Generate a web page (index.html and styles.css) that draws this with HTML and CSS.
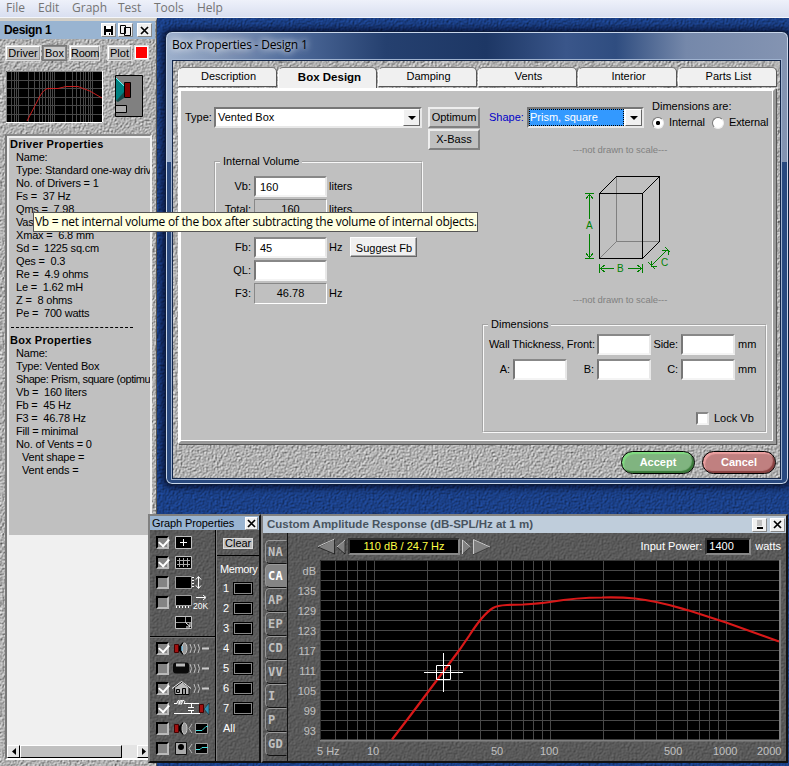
FILE: index.html
```html
<!DOCTYPE html>
<html lang="en">
<head>
<meta charset="utf-8">
<title>Box Properties - Design 1</title>
<link rel="stylesheet" href="styles.css">
</head>
<body>
<nav class="menubar"><span>File</span><span>Edit</span><span>Graph</span><span>Test</span><span>Tools</span><span>Help</span></nav>

<section class="design">
  <header class="bar design-bar">
    <b>Design 1</b>
    <span class="sysbtn"><svg width="11" height="11"><path d="M1 1h9v9H1z"/><path d="M3 1h5v3H3zM3 7h5v3H3z" fill="#fff"/><path d="M6 8h1v2H6z"/></svg></span>
    <span class="sysbtn"><svg width="11" height="11" fill="#f0f0f0" stroke="#000"><path d="M.5.5h5v8h-5zM4.500 2.500h6v8h-6z"/></svg></span>
    <span class="sysbtn last"><svg width="9" height="9" stroke="#000" stroke-width="1.700"><path d="M1 1l7 7M8 1L1 8"/></svg></span>
  </header>
  <div class="tools">
    <button class="t1">Driver</button><button class="t2 on">Box</button><button class="t3">Room</button><button class="t4">Plot</button><i class="swatch"></i>
  </div>
  <div class="thumbs">
    <svg class="mini" width="97" height="52"><rect width="97" height="52" fill="#000"/>
      <path d="M5.500 1v50M8.500 1v50M10.500 1v50M12.500 1v50M22.500 1v50M28.500 1v50M33.500 1v50M36.500 1v50M39.500 1v50M42.500 1v50M44.500 1v50M46.500 1v50M48.500 1v50M59.500 1v50M66.500 1v50M70.500 1v50M74.500 1v50M77.500 1v50M79.500 1v50M82.500 1v50M84.500 1v50M86.500 1v50M1 9.500h95M1 17.500h95M1 26.500h95M1 34.500h95M1 43.500h95" stroke="#484848"/>
      <path d="M21 50L34 25Q38 18 42 17.500H52L60 15.500H72Q84 19 96 27" fill="none" stroke="#c82020"/>
      <path d="M0 51.500h96.500V0" fill="none" stroke="#fff"/><path d="M.5 51V.5H96" fill="none" stroke="#808080"/></svg>
    <svg class="speaker" width="28" height="42"><path d="M.5.5h27v41H.5z" fill="#808080" stroke="#000"/><path d="M1 3l8 8v7l-8 8z" fill="#008080"/><path d="M1 26l8-9v6l-6 4z" fill="#154848"/><path d="M1 3l8 8" stroke="#5ff"/><path d="M9.500 7.500h6v15h-6z" fill="#800000" stroke="#000"/><path d="M1 30h10v7H1z" fill="#aaa"/><path d="M1 30.500h10.500v7H1" fill="none" stroke="#000"/></svg>
  </div>
  <div class="list">
    <div class="list-body">
      <h3>Driver Properties</h3>
      <p>Name:</p><p>Type: Standard one-way driv</p><p>No. of Drivers = 1</p><p>Fs =&nbsp; 37 Hz</p><p>Qms =&nbsp; 7.98</p><p>Vas</p><p>Xmax =&nbsp; 6.8 mm</p><p>Sd =&nbsp; 1225 sq.cm</p><p>Qes =&nbsp; 0.3</p><p>Re =&nbsp; 4.9 ohms</p><p>Le =&nbsp; 1.62 mH</p><p>Z =&nbsp; 8 ohms</p><p>Pe =&nbsp; 700 watts</p>
      <div class="rule"></div>
      <h3>Box Properties</h3>
      <p>Name:</p><p>Type: Vented Box</p><p class="tight">Shape: Prism, square (optimu</p><p>Vb =&nbsp; 160 liters</p><p>Fb =&nbsp; 45 Hz</p><p>F3 =&nbsp; 46.78 Hz</p><p>Fill = minimal</p><p>No. of Vents = 0</p><p class="in">Vent shape =</p><p class="in">Vent ends =</p>
    </div>
    <div class="scroll"><i class="sb"><svg width="4" height="7"><path d="M4 0v7L0 3.500z"/></svg></i><i class="thumb"></i><i class="track"></i><i class="sb"><svg width="4" height="7"><path d="M0 0v7l4-3.500z"/></svg></i></div>
  </div>
</section>

<section class="dialog">
  <h2><span>Box Properties - Design 1</span></h2>
  <div class="client">
    <div class="tabs"><span>Description</span><span class="sel">Box Design</span><span>Damping</span><span>Vents</span><span>Interior</span><span>Parts List</span></div>
    <div class="page">
      <div class="left">
        <div class="type-row">
          <label>Type:</label>
          <div class="combo type"><span>Vented Box</span><i><svg width="8" height="4"><path d="M0 0h8L4 4z"/></svg></i></div>
          <div class="stack"><button>Optimum</button><button>X-Bass</button></div>
        </div>
        <fieldset class="volume"><legend>Internal Volume</legend>
          <div class="field"><label>Vb:</label><span class="input">160</span><em>liters</em></div>
          <div class="field"><label>Total:</label><span class="input ro">160</span><em>liters</em></div>
        </fieldset>
        <div class="tuning">
          <div class="field"><label>Fb:</label><span class="input">45</span><em>Hz</em><button class="suggest">Suggest Fb</button></div>
          <div class="field"><label>QL:</label><span class="input"></span></div>
          <div class="field"><label>F3:</label><span class="input ro">46.78</span><em>Hz</em></div>
        </div>
      </div>
      <div class="right">
        <div class="shape-row">
          <label class="blue">Shape:</label>
          <div class="combo shape"><span>Prism, square</span><i><svg width="8" height="4"><path d="M0 0h8L4 4z"/></svg></i></div>
          <div class="units"><div>Dimensions are:</div><div class="radios"><i class="radio on"></i><span>Internal</span><i class="radio"></i><span class="ext">External</span></div></div>
        </div>
        <div class="scale">---not drawn to scale---</div>
        <svg class="prism" width="90" height="100" fill="none" shape-rendering="crispEdges">
          <g stroke="#808080"><path d="M31.500 1.500v65H75M31.500 66.500l-17 17"/></g>
          <path d="M14.500 18.500h43v65h-43zM14.500 18.500l17-17h43l-17 17M74.500 1.500v65l-17 17" stroke="#000"/>
          <g stroke="#008000"><path d="M0 18.500h9M0 83.500h9M4.500 19v25M4.500 59v24M1 24l3.500-5L8 24M1 78l3.500 5L8 78M14.500 89v9M57.500 89v9M15 93.500h14M43 93.500h14M20 90l-5 3.500 5 3.500M52 90l5 3.500-5 3.500M66 91l16-16M63 87l7 7M80 72l5 5M66 86v5h6M77 75h6v5"/></g>
          <g fill="#008000" font-size="10"><text x="1" y="54">A</text><text x="32" y="97">B</text><text x="76" y="91">C</text></g>
        </svg>
        <div class="scale second">---not drawn to scale---</div>
        <fieldset class="dims"><legend>Dimensions</legend>
          <div class="drow"><label class="wide">Wall Thickness, Front:</label><span class="input"></span><label>Side:</label><span class="input"></span><em>mm</em></div>
          <div class="drow"><label class="a">A:</label><span class="input"></span><label>B:</label><span class="input"></span><label>C:</label><span class="input"></span><em>mm</em></div>
          <div class="lock"><i class="check"></i><span>Lock Vb</span></div>
        </fieldset>
      </div>
    </div>
    <div class="actions"><button class="pill ok">Accept</button><button class="pill no">Cancel</button></div>
  </div>
</section>

<section class="gprops">
  <header class="bar"><span>Graph Properties</span><span class="sysbtn last"><svg width="9" height="9" stroke="#000" stroke-width="1.700"><path d="M1 1l7 7M8 1L1 8"/></svg></span></header>
  <div class="gbody">
    <div class="gleft">
      <div class="group">
        <div class="g"><i class="ck on"></i><svg width="42" height="20"><path d="M3.500 4.500h16v12h-16z" stroke="#c0c0c0"/><path d="M11.500 7v7M8 10.500h7" stroke="#fff"/></svg></div>
        <div class="g"><i class="ck on"></i><svg width="42" height="20"><path d="M3.500 4.500h16v12h-16z" stroke="#c0c0c0"/><path d="M7.500 6v9M11.500 6v9M15.500 6v9M5 8.500h13M5 12.500h13" stroke="#aaa"/></svg></div>
        <div class="g"><i class="ck"></i><svg width="42" height="20"><path d="M3.500 4.500h16v12h-16z" stroke="#a0a0a0"/><path d="M20 5.500h2M20 8.500h2M20 11.500h2M20 14.500h2M26.500 5v11M24 7.500l2.500-3 2.500 3M24 13.500l2.500 3 2.500-3" stroke="#fff" fill="none"/></svg></div>
        <div class="g"><i class="ck"></i><svg width="42" height="20"><path d="M3.500 3.500h16v10h-16z" stroke="#a0a0a0"/><path d="M4.500 14v2M7.500 14v2M10.500 14v2M13.500 14v2M16.500 14v2M24 5.500h9M31 3l3 2.500L31 8" stroke="#fff" fill="none"/><text x="21" y="17" font-size="8.500" fill="#fff">20K</text></svg></div>
        <div class="g"><i class="nock"></i><svg width="42" height="20"><path d="M3.500 4.500h16v12h-16z" stroke="#c0c0c0"/><path d="M13.500 5v5.500M4 10.500h15" stroke="#999" fill="none"/><path d="M13.500 10.500l4.500 4M18 11v4h-4" stroke="#fff" fill="none"/></svg></div>
      </div>
      <div class="group two">
        <div class="g"><i class="ck on"></i><svg width="42" height="20"><path d="M2.500 6.500h4v8h-4z" fill="#a01010" stroke="#400"/><path d="M7 8l4-4v13l-4-4z" fill="#000"/><ellipse cx="12.500" cy="10.500" rx="2.500" ry="5.500" fill="#999" stroke="#ccc"/><path d="M10 8v5" stroke="#6cf"/><path d="M18 6q3 4.500 0 9M22 6q3 4.500 0 9M26 6q3 4.500 0 9" fill="none" stroke="#bbb"/><path d="M30 10.500h7" stroke="#ccc" stroke-width="2"/></svg></div>
        <div class="g"><i class="ck"></i><svg width="42" height="20"><rect x="1" y="4.500" width="16" height="11" rx="3" fill="#0a0a0a"/><path d="M4 7h9" stroke="#bbb" stroke-width="3"/><path d="M18 6q3 4.500 0 9M22 6q3 4.500 0 9M26 6q3 4.500 0 9" fill="none" stroke="#bbb"/><path d="M30 10.500h7" stroke="#ccc" stroke-width="2"/></svg></div>
        <div class="g"><i class="ck on"></i><svg width="42" height="20"><path d="M2.500 9.500L10 4l7 5.500v7h-14z" fill="#bbb" stroke="#000"/><path d="M0 10.500L9.500 3.500l9.500 7" fill="none" stroke="#eee"/><path d="M4.500 11.500h3v3h-3zM10.500 10.500h3v6h-3z" fill="#999" stroke="#000"/><path d="M22 6q3 4.500 0 9M26 6q3 4.500 0 9" fill="none" stroke="#bbb"/><path d="M30 10.500h7" stroke="#ccc" stroke-width="2"/></svg></div>
        <div class="g"><i class="ck on"></i><svg width="42" height="20"><path d="M2 5.500h3q0-3 2-3t0 4q-1-4 2-4t0 4q-1-4 2-4t1 3h15M2 15.500h26M19.500 6v3M16 9.500h6M16 12.500h6M19.500 13v3" fill="none" stroke="#fff"/><path d="M27.500 6.500h4v8h-4z" fill="#a01010" stroke="#400"/><path d="M37 5v12l-5-6z" fill="#3090b0" stroke="#111" stroke-width=".5"/></svg></div>
        <div class="g"><i class="ck"></i><svg width="42" height="20"><path d="M2.500 6.500h4v8h-4z" fill="#a01010" stroke="#400"/><path d="M7 8l4-4v13l-4-4z" fill="#000"/><ellipse cx="12.500" cy="10.500" rx="2.500" ry="5.500" fill="#999" stroke="#ccc"/><path d="M20 6l-3 4.500 3 4.500" fill="none" stroke="#bbb"/><path d="M23.500 5.500h12v10h-12z" stroke="#999"/><path d="M24 12.500h6l4-4h2" fill="none" stroke="#4dd"/></svg></div>
        <div class="g"><i class="ck"></i><svg width="42" height="20"><path d="M3.500 4.500h11v12h-11z" fill="#aaa" stroke="#111"/><circle cx="9" cy="9" r="3"/><path d="M20 6l-3 4.500 3 4.500" fill="none" stroke="#bbb"/><path d="M23.500 5.500h12v10h-12z" stroke="#999"/><path d="M24 11.500h4l2-2h6" fill="none" stroke="#4dd"/></svg></div>
      </div>
    </div>
    <div class="gright">
      <div class="clear"><span>Clear</span></div>
      <div class="mem"><div class="mh">Memory</div>
        <div class="m"><span>1</span><i></i></div><div class="m"><span>2</span><i></i></div><div class="m"><span>3</span><i></i></div><div class="m"><span>4</span><i></i></div><div class="m"><span>5</span><i></i></div><div class="m"><span>6</span><i></i></div><div class="m"><span>7</span><i></i></div><div class="m"><span>All</span></div>
      </div>
    </div>
  </div>
</section>

<section class="amp">
  <header class="bar pale"><b>Custom Amplitude Response (dB-SPL/Hz at 1 m)</b><span class="sysbtn"><svg width="9" height="11"><path d="M2 1h5v6H2z" fill="#c0c0c0"/><path d="M2 8h6v2H2z"/></svg></span><span class="sysbtn last"><svg width="9" height="9" stroke="#000" stroke-width="1.700"><path d="M1 1l7 7M8 1L1 8"/></svg></span></header>
  <div class="abody">
    <div class="side"><span>NA</span><span class="cur">CA</span><span>AP</span><span>EP</span><span>CD</span><span>VV</span><span>I</span><span>P</span><span>GD</span></div>
    <div class="plot">
      <div class="ctl">
        <svg width="30" height="18" fill="#808080"><path d="M17.500 1v15L1 9z" stroke="#000" stroke-width=".6"/><path d="M17.500 1L1 8.500" stroke="#ccc"/><path d="M28 2v14l-8-7z" stroke="#000" stroke-width=".6"/><path d="M28 2l-8 7" stroke="#ccc"/></svg>
        <div class="read">110 dB / 24.7 Hz</div>
        <svg width="30" height="18" fill="#808080"><path d="M1.500 2v14l8-7z" stroke="#222" stroke-width=".6"/><path d="M1.500 16V2l8 7" fill="none" stroke="#ccc"/><path d="M12.500 1v15.500L29 9z" stroke="#222" stroke-width=".6"/><path d="M12.500 16V1.500L29 9" fill="none" stroke="#ccc"/></svg>
        <span class="ip">Input Power:</span><div class="pw">1400</div><span>watts</span>
      </div>
      <svg class="chart" width="499" height="202">
        <path d="M32 0h461v180H32z"/>
        <path stroke="#484848" shape-rendering="crispEdges" d="M47.500 1v179M59.500 1v179M69.500 1v179M78.500 1v179M86.500 1v179M139.500 1v179M170.500 1v179M192.500 1v179M209.500 1v179M223.500 1v179M235.500 1v179M245.500 1v179M254.500 1v179M262.500 1v179M315.500 1v179M346.500 1v179M368.500 1v179M385.500 1v179M399.500 1v179M411.500 1v179M421.500 1v179M430.500 1v179M438.500 1v179M33 10.500h458M33 20.500h458M33 30.500h458M33 40.500h458M33 50.500h458M33 60.500h458M33 70.500h458M33 80.500h458M33 90.500h458M33 100.500h458M33 110.500h458M33 120.500h458M33 130.500h458M33 140.500h458M33 150.500h458M33 160.500h458M33 170.500h458"/>
        <path d="M32 180.500h460V0" fill="none" stroke="#808080" stroke-width="2"/><path d="M32.500 180V.5H491" fill="none" stroke="#333"/>
        <path d="M104 179.500L122 156L155 112L171 90.500L181 76Q195 54 205 48Q209 45.500 219 45L235 44.500Q252 43.500 262 42C280 39 295 37.500 314 37.500Q332 37 347 38.500C370 41 385 46 401 50.500L438 62.500L491 81.500" fill="none" stroke="#d81818" stroke-width="2.200"/>
        <path d="M136 112.500h39M155.500 93v39M148.500 105.500h14v14h-14z" fill="none" stroke="#fff"/>
        <g class="ylab"><text x="28" y="15">dB</text><text x="28" y="35">135</text><text x="28" y="55">129</text><text x="28" y="75">123</text><text x="28" y="95">117</text><text x="28" y="115">111</text><text x="28" y="135">105</text><text x="28" y="155">99</text><text x="28" y="175">93</text></g>
        <g class="xlab"><text x="29" y="195">5 Hz</text><text x="79" y="195">10</text><text x="203" y="195">50</text><text x="252" y="195">100</text><text x="376" y="195">500</text><text x="425" y="195">1000</text><text x="469" y="195">2000</text></g>
      </svg>
    </div>
  </div>
</section>

<div class="tooltip">Vb = net internal volume of the box after subtracting the volume of internal objects.</div>
</body>
</html>
```
FILE: styles.css
```css
:root {
  --stone: url("data:image/svg+xml,%3Csvg xmlns='http://www.w3.org/2000/svg' width='256' height='256'%3E%3Cfilter id='f' x='0' y='0' width='1' height='1' color-interpolation-filters='sRGB'%3E%3CfeTurbulence type='fractalNoise' baseFrequency='.55' numOctaves='2' stitchTiles='stitch'/%3E%3CfeDiffuseLighting surfaceScale='1' lighting-color='%23fafafa'%3E%3CfeDistantLight azimuth='225' elevation='45'/%3E%3C/feDiffuseLighting%3E%3C/filter%3E%3Crect width='256' height='256' filter='url(%23f)'/%3E%3C/svg%3E");
  --slate: url("data:image/svg+xml,%3Csvg xmlns='http://www.w3.org/2000/svg' width='256' height='256'%3E%3Cfilter id='f' x='0' y='0' width='1' height='1' color-interpolation-filters='sRGB'%3E%3CfeTurbulence type='fractalNoise' baseFrequency='.5' numOctaves='2' stitchTiles='stitch'/%3E%3CfeDiffuseLighting surfaceScale='.55' lighting-color='%237e7e7e'%3E%3CfeDistantLight azimuth='225' elevation='45'/%3E%3C/feDiffuseLighting%3E%3C/filter%3E%3Crect width='256' height='256' filter='url(%23f)'/%3E%3C/svg%3E");
  --navy: url("data:image/svg+xml,%3Csvg xmlns='http://www.w3.org/2000/svg' width='256' height='256'%3E%3Cfilter id='f' x='0' y='0' width='1' height='1' color-interpolation-filters='sRGB'%3E%3CfeTurbulence type='fractalNoise' baseFrequency='.5' numOctaves='2' stitchTiles='stitch'/%3E%3CfeDiffuseLighting surfaceScale='.8' lighting-color='%23265abe'%3E%3CfeDistantLight azimuth='225' elevation='45'/%3E%3C/feDiffuseLighting%3E%3C/filter%3E%3Crect width='256' height='256' filter='url(%23f)'/%3E%3C/svg%3E");
}
* { box-sizing: border-box; }
body { margin: 0; width: 789px; height: 766px; overflow: hidden; position: relative; background: #1a3a80 var(--navy); font: 11px/13px "Liberation Sans", Arial, sans-serif; color: #000; }
svg { display: block; flex: none; }
button { font: inherit; color: inherit; padding: 0; margin: 0; border: 0; white-space: nowrap; }
i, em { font-style: normal; display: block; flex: none; }

.menubar { height: 18px; display: grid; grid-template-columns: 32px 34px 46px 36px 43px 40px; padding-left: 6px; background: linear-gradient(#eef1fa, #d9dff0); border-bottom: 1px solid #f4f6fb; font: 12px/16px "Open Sans", "Noto Sans", sans-serif; color: #747474; }

.bar { display: flex; align-items: center; background: #99b4d1; }
.bar > :first-child { flex: 1; white-space: nowrap; }
.sysbtn { width: 15px; height: 14px; display: flex; align-items: center; justify-content: center; background: #f0f0f0; border: 1px solid; border-color: #fff #888 #888 #fff; margin-left: 2px; }

.design { position: absolute; left: 0; top: 18px; width: 157px; height: 748px; background: #b2b2b2 var(--stone); border-top: 3px solid #d4d0c8; border-right: 1px solid #555; }
.design-bar { height: 18px; padding: 0 3px 0 4px; font-size: 12px; margin-right: 1px; }
.design-bar b { letter-spacing: -.35px; }
.design-bar .last { margin-left: 4px; }
.tools { display: flex; padding: 7px 0 0 6px; height: 32px; }
.tools button { height: 14px; line-height: 13px; background: #c0c0c0; border: 1px solid; border-color: #fff #999 #999 #fff; box-shadow: 0 0 0 1px #e0e0e0; }
.tools .on { border: 1px solid #888; box-shadow: 0 0 0 1px #777; background: #ccc; }
.t1 { width: 34px; } .tools .t2 { width: 23px; margin-left: 3px; } .tools .t3 { width: 29px; margin-left: 4px; letter-spacing: -.3px; } .tools .t4 { width: 23px; margin-left: 9px; }
.swatch { width: 13px; height: 13px; background: red; border: 1px solid #fff; margin-left: 4px; outline: 1px solid #ddd; }
.thumbs { display: flex; padding-left: 6px; height: 63px; }
.speaker { margin: 4px 0 0 12px; }
.list { margin-left: 5px; width: 147px; height: 626px; border: solid; border-width: 2px; border-color: #888 #f0f0f0 #fff #777; background: #f0f0f0; display: flex; flex-direction: column; justify-content: space-between; }
.list-body { margin: 2px 0 0 2px; height: 397px; background: #c0c0c0; overflow: hidden; white-space: nowrap; letter-spacing: -.18px; }
.list h3 { margin: 0; padding-left: 1px; font-size: 11px; line-height: 13px; letter-spacing: .25px; }
.list p { margin: 0 0 0 7px; line-height: 13px; }
.list p.in { margin-left: 13px; }
.list .tight { letter-spacing: -.4px; }
.rule { width: 122px; margin: 7px 0 6px 2px; border-top: 1px dashed #000; }
.scroll { display: flex; height: 13px; background: #e4e4e4; }
.sb, .thumb { border: 1px solid; border-color: #fff #000 #000 #fff; background: #e4e4e4; }
.sb { width: 13px; display: flex; align-items: center; justify-content: center; }
.thumb { width: 102px; background: #c0c0c0; }
.track { flex: 1; }

.dialog { position: absolute; left: 165px; top: 31px; width: 624px; height: 454px; padding: 0 7px 0 6px; border: 1px solid #0c1c3c; border-radius: 7px; background: linear-gradient(90deg, #9db0cc 0, #7f93b5 60px, #4f6b9b 125px, #25406f 220px, #1d3765 320px, #3a568a 400px, #2f4d80 450px, #7588aa 520px, #8494b2 100%) 0 0 / 100% 130px no-repeat, #29497f; box-shadow: inset 0 0 0 1px #c8d6ea, 0 0 6px 3px rgba(0, 0, 20, .65); }
.dialog h2 { margin: 0; height: 28px; font: 12px/26px "Open Sans", "Noto Sans", sans-serif; letter-spacing: -.2px; }
.dialog h2 span { text-shadow: 0 0 7px #fff, 0 0 9px rgba(255, 255, 255, .8); }
.client { height: 419px; background: #b2b2b2 var(--stone); border: 1px solid #13264a; box-shadow: 0 0 0 1px #9fb2cf; padding: 6px 4px 0 5px; }
.tabs { display: flex; height: 20px; }
.tabs span { flex: none; width: 99px; margin-right: 1px; padding-left: 2px; background: #f0f0f0; border: 1px solid #555; border-top-color: #777; border-left-color: #fff; border-radius: 5px 5px 0 0; text-align: center; line-height: 17px; }
.tabs .sel { font-weight: bold; font-size: 11.500px; line-height: 19px; border-bottom: 0; height: 21px; padding-left: 4px; }
.page { height: 356px; margin-top: 1px; background: #c0c0c0; border: solid; border-width: 3px; border-color: #fff #999 #999 #fff; box-shadow: inset -1px -1px #fff, 1px 1px #555; display: flex; }
.left { width: 299px; flex: none; padding: 16px 0 0 4px; }
.type-row, .shape-row { display: flex; }
.type-row label { width: 29px; padding-top: 4px; }
.combo { display: flex; height: 21px; background: #fff; border: 2px solid; border-color: #777 #e8e8e8 #e8e8e8 #777; padding-left: 3px; line-height: 17px; }
.combo i { width: 17px; display: flex; align-items: center; justify-content: center; background: #f0f0f0; border: 1px solid; border-color: #fff #666 #666 #fff; }
.combo span { flex: 1; }
.type { width: 208px; padding-left: 2px; }
.stack { margin-left: 6px; display: grid; gap: 1px; height: 43px; }
.stack button { width: 52px; height: 21px; background: #c0c0c0; border: 2px solid; border-color: #eee #808080 #808080 #eee; }
fieldset { margin: 0; padding: 0; border: 2px groove #f8f8f8; min-inline-size: 0; }
legend { padding: 0 3px; margin-left: 4px; line-height: 13px; }
.volume { margin: 5px 0 0 29px; width: 209px; height: 72px; }
.field { display: flex; height: 21px; margin-bottom: 2px; line-height: 20px; }
.field label { width: 35px; margin-right: 3px; text-align: right; }
.field em { margin-left: 2px; }
.volume .field:first-of-type { margin-top: 8px; }
.input { display: block; width: 73px; height: 21px; background: #fff; border: 2px solid; border-color: #888 #e8e8e8 #f4f4f4 #777; padding-left: 4px; line-height: 18px; }
.input.ro { background: #c0c0c0; border-width: 1px; border-color: #888 #fff #fff #888; text-align: center; padding: 0; }
.tuning { margin: 10px 0 0 31px; }
.suggest { width: 67px; height: 20px; margin-left: 8px; background: #f0f0f0; border: 1px solid; border-color: #fff #666 #666 #fff; box-shadow: inset -1px -1px #aaa; }
.right { width: 293px; flex: none; padding: 9px 0 0 3px; }
.blue { color: #0000c8; width: 38px; margin-left: 6px; padding-top: 11px; flex: none; }
.shape { width: 117px; flex: none; margin-top: 7px; padding-left: 0; }
.shape span { background: #3399ff; color: #fff; outline: 1px dotted #000; outline-offset: -1px; padding-left: 1px; margin-right: 1px; }
.units { margin-left: 8px; }
.radios { display: flex; align-items: center; margin-top: 3px; white-space: nowrap; }
.radio { width: 12px; height: 12px; border-radius: 50%; background: #fff; border: 1px solid; border-color: #777 #eee #eee #777; }
.radio.on { background: radial-gradient(circle, #000 0 1.800px, #fff 2.500px); }
.radios span { margin-left: 5px; letter-spacing: -.1px; }
.radios .radio + span + .radio { margin-left: 7px; }
.scale { width: 274px; text-align: center; color: #808080; font-size: 9.500px; line-height: 13px; margin-top: 14px; letter-spacing: -.06px; }
.prism { margin: 19px 0 0 102px; }
.scale.second { margin-top: 18px; }
.dims { margin: 12px 0 0 -1px; width: 285px; height: 115px; }
.drow { display: flex; height: 21px; margin: 3px 0 4px; line-height: 20px; }
.drow .input { width: 54px; }
.drow label { width: 30px; padding-right: 3px; text-align: right; white-space: nowrap; letter-spacing: -.1px; }
.drow .wide { width: 113px; padding-right: 2px; }
.drow .a { width: 29px; }
.drow em { margin-left: 3px; }
.lock { display: flex; align-items: center; gap: 5px; margin: 32px 0 0 212px; }
.check { width: 13px; height: 13px; background: #fff; border: 2px solid; border-color: #888 #e8e8e8 #f4f4f4 #777; }
.actions { display: flex; justify-content: flex-end; gap: 7px; padding: 7px 0 0 0; }
.pill { width: 74px; height: 23px; border: 1.500px solid #000; border-radius: 12px; color: #fff; font-weight: bold; }
.ok { background: #80b480; box-shadow: inset 2px 2px 1px #80dc80, inset -2px -2px 1px #387838; }
.no { background: #c08080; box-shadow: inset 2px 2px 1px #eca0a0, inset -2px -2px 1px #884040; }

.gprops, .amp { position: absolute; top: 514px; height: 249px; border: 2px solid; border-color: #808080 #111 #111 #808080; background: #585858 var(--slate); color: #fff; }
.gprops { left: 148px; width: 113px; }
.gprops .bar { height: 14px; color: #000; padding: 0 1px 0 2px; }
.gprops .bar > :first-child { letter-spacing: -.1px; }
.gprops .sysbtn { width: 13px; height: 13px; }
.gbody { display: flex; height: 231px; }
.gleft { width: 66px; border-right: 1px solid #000; box-shadow: 1px 0 #808080; padding-top: 2px; }
.group { height: 105px; border-bottom: 1px solid #000; box-shadow: 0 1px #777; }
.group.two { border: 0; box-shadow: none; padding-top: 1px; }
.g { display: flex; height: 20px; align-items: center; padding-left: 6px; }
.g svg { margin-left: 3px; }
.ck { width: 13px; height: 13px; background: #848484; border: 2px solid; border-color: #000 #bbb #bbb #000; }
.ck.on { position: relative; }
.ck.on::after { content: ""; position: absolute; left: .5px; top: 0; width: 8px; height: 5px; border: solid #fff; border-width: 0 0 2px 2px; transform: rotate(-48deg); }
.nock { width: 13px; }
.gright { flex: 1; padding-left: 1px; }
.clear { height: 26px; padding: 8px 0 0 6px; border-bottom: 1px solid #000; }
.clear span { display: block; width: 30px; height: 11px; background: #c0c0c0; border: 1px solid #ddd; color: #000; padding-left: 1px; line-height: 9px; }
.mh { padding: 7px 0 0 3px; height: 22px; letter-spacing: -.4px; }
.m { display: flex; height: 20px; align-items: center; padding-left: 6px; }
.m span { width: 10px; }
.m i { width: 20px; height: 13px; background: #000; border: 1px solid #000; outline: 1px solid #888; outline-offset: -2px; }

.amp { left: 261px; width: 527px; }
.pale { height: 17px; background: #bfcddb; color: #48545f; padding: 0 1px 0 4px; font-size: 11.500px; }
.pale .sysbtn { margin-left: 3px; }
.abody { display: flex; height: 228px; }
.side { width: 25px; padding: 7px 0 0 2px; border-right: 1px solid #111; }
.side span { display: block; height: 24px; border: 1px solid; border-color: #999 transparent #111 #999; border-radius: 5px 0 0 5px; padding-left: 2px; font: bold 12px/23px "DejaVu Sans Mono", monospace; letter-spacing: .3px; color: #c0c0c0; }
.side .cur { background: #848484; color: #fff; }
.plot { width: 498px; }
.ctl { display: flex; height: 27px; align-items: center; padding-left: 29px; }
.read, .pw { height: 17px; background: #000; border: 2px solid; border-color: #333 #888 #888 #333; line-height: 13px; }
.read { width: 112px; margin: 0 1px; text-align: center; color: #ff4; }
.ip { margin-left: auto; }
.pw { width: 46px; margin: 0 4px 0 3px; padding-left: 2px; }
.ctl span:last-child { margin-right: 5px; }
.chart text { font-size: 11px; fill: #c0c0c0; }
.ylab { text-anchor: end; }

.tooltip { position: absolute; left: 33px; top: 212px; width: 445px; height: 20px; border: 1px solid #555; background: #ffffe1; padding-left: 1px; font: 12px/18px "Open Sans", "Noto Sans", sans-serif; letter-spacing: -.29px; white-space: nowrap; }
```
